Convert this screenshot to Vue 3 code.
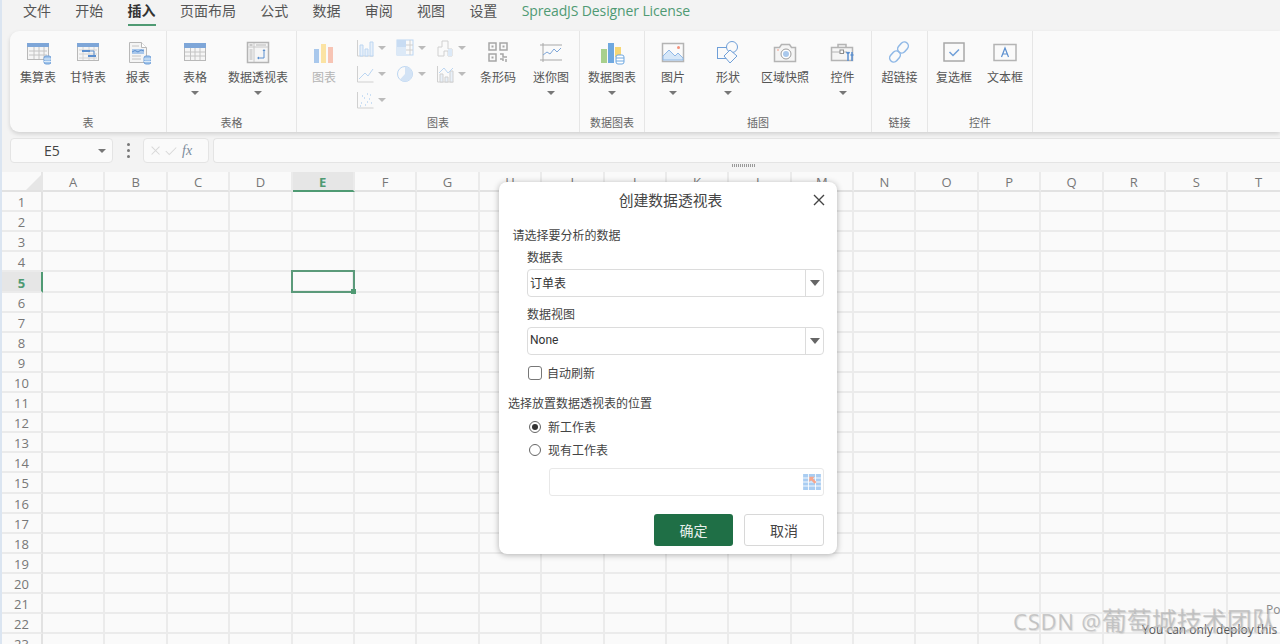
<script setup>
const tabs = ['文件', '开始', '插入', '页面布局', '公式', '数据', '审阅', '视图', '设置']

const gridLines = (c) => `<path d="M3 11h18M3 15h18M8 7v12M13 7v12M18 7v12" stroke="${c}" fill="none"/>`
const badge = `<rect x="18" y="16" width="7" height="8" rx="2" fill="#9fc3ea" stroke="#6f9fd8"/><path d="M18 19h7M18 21.500h7" stroke="#dcebf9"/>`

const icons = {
  sumTable: `<rect x="1.500" y="3.500" width="21" height="16" fill="#f5f5f5" stroke="#b8b8b8"/><rect x="1" y="3" width="22" height="4" fill="#7ea6d8"/>${gridLines('#c4c4c4')}${badge}`,
  gantt: `<rect x="1.500" y="3.500" width="21" height="17" fill="#f5f5f5" stroke="#b8b8b8"/><rect x="1" y="3" width="22" height="4" fill="#7ea6d8"/><path d="M3 10h18M3 14h18M3 18h18M7 7v13M13 7v13M18 7v13" stroke="#d4d4d4"/><rect x="6" y="10" width="8" height="2" fill="#5b8fcf"/><rect x="12" y="15" width="8" height="2" fill="#5b8fcf"/><path d="M14 11h4v4" stroke="#5b8fcf" fill="none"/>`,
  report: `<path d="M3.500 2.500h12l5 5v15h-17z" fill="#f5f5f5" stroke="#b8b8b8"/><path d="M15.500 2.500v5h5" fill="#fff" stroke="#b8b8b8"/><rect x="6" y="9" width="12" height="5" fill="#a9c8ec"/><path d="M6 12l3-1.500 3 1.500 3-2 3 1" stroke="#5b8fcf" fill="none"/><path d="M6 6h7M6 16h9M6 19h9" stroke="#c4c4c4"/>${badge}`,
  table: `<rect x="1.500" y="3.500" width="21" height="17" fill="#f5f5f5" stroke="#b8b8b8"/><rect x="1" y="3" width="22" height="5" fill="#7ea6d8"/><path d="M2 12h20M2 16h20M7.500 8v12M12 8v12M17 8v12" stroke="#c4c4c4"/>`,
  pivot: `<rect x="1.500" y="2.500" width="21" height="20" fill="#f5f5f5" stroke="#b4b4b4" stroke-width="1.500"/><path d="M2 7h20M8 3v19" stroke="#c8c8c8"/><rect x="3.500" y="4" width="3" height="2" fill="#c8c8c8"/><rect x="3.500" y="9" width="3" height="11" fill="#d6d6d6"/><rect x="10" y="4" width="10" height="2" fill="#d6d6d6"/><path d="M18 10v8h-6" stroke="#5b8fcf" fill="none"/><path d="M16.500 11l1.500-2 1.500 2zM13 16.500l-2 1.500 2 1.500z" fill="#5b8fcf"/>`,
  chart: `<rect x="2" y="9" width="5" height="14" fill="#a9c8ec"/><rect x="9" y="4" width="5" height="19" fill="#fbe3a3"/><rect x="16" y="7" width="5" height="16" fill="#f7c4b4"/>`,
  barcode: `<g fill="none" stroke="#a6a6a6" stroke-width="1.500"><rect x="3" y="3" width="7" height="7"/><rect x="14" y="3" width="7" height="7"/><rect x="3" y="14" width="7" height="7"/><path d="M14 14h3v3h4M14 19h3v2M20 19v3"/></g><rect x="5.500" y="5.500" width="2" height="2" fill="#a6a6a6"/><rect x="16.500" y="5.500" width="2" height="2" fill="#a6a6a6"/><rect x="5.500" y="16.500" width="2" height="2" fill="#a6a6a6"/>`,
  spark: `<path d="M1 5h22M1 20h22M4 3v19" stroke="#a8a8a8" fill="none"/><path d="M4 15l4-3 3 2 4-5 3 3 4-4" stroke="#7ea6d8" fill="none"/>`,
  dataChart: `<rect x="1" y="9" width="6" height="14" fill="#a8d08d"/><rect x="8" y="3" width="6" height="20" fill="#6fa8e0"/><rect x="15" y="7" width="6" height="10" fill="#f7d774"/><rect x="16" y="15" width="8" height="9" rx="2" fill="#fff" stroke="#6fa8e0"/><path d="M16 18h8M16 21h8" stroke="#6fa8e0"/>`,
  picture: `<rect x="1.500" y="3.500" width="21" height="18" fill="#fafafa" stroke="#b4b4b4" stroke-width="1.500"/><path d="M2 20v-4l6-6 6 6 3-3 5 5v2z" fill="#d6e7f8" stroke="#8fb8e6"/><circle cx="17.500" cy="7.500" r="1.500" fill="#f5917a"/>`,
  shape: `<rect x="1.500" y="7.500" width="12" height="11" fill="#fafafa" stroke="#6f9fd8"/><circle cx="16" cy="7" r="5.500" fill="#fafafa" stroke="#6f9fd8"/><path d="M14 10l7 6-7 7-6-7z" fill="#fafafa" stroke="#6f9fd8"/>`,
  camera: `<path d="M1.500 7.500h5l2-3h8l2 3h4v14h-21z" fill="#f5f5f5" stroke="#b4b4b4" stroke-width="1.500"/><circle cx="13" cy="14" r="5" fill="#fff" stroke="#9c9c9c"/><circle cx="13" cy="14" r="3" fill="#a9c8ec"/><circle cx="5" cy="10" r=".8" fill="#f5917a"/>`,
  control: `<path d="M1.500 7.500h21v13h-21zM8 7.500v-3h8v3" fill="#f5f5f5" stroke="#b4b4b4" stroke-width="1.500"/><path d="M2 12h8M14 12h3" stroke="#b4b4b4"/><rect x="10" y="10" width="3.500" height="3.500" fill="#fafafa" stroke="#8c8c8c"/><path d="M18 12v9M22 12v9M16.500 12l1.500 2 1.500-2M20.500 15h3" stroke="#5b8fcf" stroke-width="1.500" fill="none"/>`,
  link: `<g fill="none" stroke="#8fb8e6" stroke-width="1.500"><rect x="12" y="1.500" width="8" height="12" rx="4" transform="rotate(42 16 7.500)"/><rect x="4" y="10.500" width="8" height="12" rx="4" transform="rotate(42 8 16.500)"/></g>`,
  check: `<rect x="2" y="3" width="20" height="18" fill="#fafafa" stroke="#a8a8a8" stroke-width="1.500"/><path d="M7.500 12l3.500 3.500 6-6" stroke="#6f9fd8" stroke-width="1.500" fill="none"/>`,
  textbox: `<rect x="1" y="4.500" width="22" height="16" fill="#fafafa" stroke="#b4b4b4" stroke-width="1.500"/><path d="M8.500 17l3.500-9 3.500 9M9.800 14h4.400" stroke="#5b8fcf" stroke-width="1.200" fill="none"/>`
}

const small = {
  column: `<path d="M1.500 1v16h16" stroke="#d0d0d0" fill="none"/><path d="M4 6h3v11H4zM9 10h3v7H9zM14 3h3v14h-3z" fill="#e8f0f9" stroke="#bcd6f2"/>`,
  tree: `<rect x="1" y="1" width="16" height="15" fill="#fafafa" stroke="#bcd6f2"/><rect x="1" y="1" width="9" height="7" fill="#c8dcf3"/><rect x="1" y="8" width="9" height="8" fill="#dce9f7"/><path d="M10 6h7M10 11h7M14 1v15" stroke="#d0d0d0"/>`,
  step: `<path d="M2 17V8h4V2h6v8h4v7h-4v-5H8v5z" fill="#fafafa" stroke="#d0d0d0"/><path d="M12 10h4v7h-4z" fill="#dce9f7"/>`,
  line: `<path d="M1.500 1v16h16" stroke="#d0d0d0" fill="none"/><path d="M3 14l6-6 3 3 5-7" stroke="#bcd6f2" fill="none"/>`,
  pie: `<circle cx="9" cy="9" r="7.500" fill="#fafafa" stroke="#bcd6f2"/><path d="M9 1.500A7.500 7.500 0 0 1 16.500 9 7.500 7.500 0 0 1 4 14.500L9 9z" fill="#d3e3f5"/>`,
  combo: `<path d="M1.500 1v16h16" stroke="#d0d0d0" fill="none"/><path d="M4 9h3v8H4zM9 12h3v5H9zM14 6h3v11h-3z" fill="#e8f0f9" stroke="#d0d0d0"/><path d="M3 8l5-5 4 5 5-5" stroke="#bcd6f2" fill="none"/>`,
  scatter: `<path d="M1.500 1v16h16" stroke="#d0d0d0" fill="none"/><path d="M5 12h1M8 7h1M11 11h1M14 4h1M6 5h1M13 8h1M4 15h1M9 14h1M15 12h1M11 3h1" stroke="#bcd6f2" stroke-width="1.500"/>`
}

const groups = [
  { name: '表', width: 157, items: [
    { label: '集算表', icon: 'sumTable', width: 56 },
    { label: '甘特表', icon: 'gantt', width: 44 },
    { label: '报表', icon: 'report', width: 56 }
  ] },
  { name: '表格', width: 130, items: [
    { label: '表格', icon: 'table', width: 56, caret: true },
    { label: '数据透视表', icon: 'pivot', width: 70, caret: true }
  ] },
  { name: '图表', width: 283, chart: true, items: [
    { label: '图表', icon: 'chart', width: 54, off: true },
    { label: '条形码', icon: 'barcode', width: 54 },
    { label: '迷你图', icon: 'spark', width: 52, caret: true }
  ] },
  { name: '数据图表', width: 65, items: [
    { label: '数据图表', icon: 'dataChart', width: 64, caret: true }
  ] },
  { name: '插图', width: 227, items: [
    { label: '图片', icon: 'picture', width: 56, caret: true },
    { label: '形状', icon: 'shape', width: 54, caret: true },
    { label: '区域快照', icon: 'camera', width: 60 },
    { label: '控件', icon: 'control', width: 55, caret: true }
  ] },
  { name: '链接', width: 56, items: [
    { label: '超链接', icon: 'link', width: 55 }
  ] },
  { name: '控件', width: 105, items: [
    { label: '复选框', icon: 'check', width: 52 },
    { label: '文本框', icon: 'textbox', width: 50 }
  ] }
]

const smallCharts = ['column', 'tree', 'step', 'line', 'pie', 'combo', 'scatter']

const columns = 'ABCDEFGHIJKLMNOPQRST'.split('')
const rows = Array.from({ length: 23 }, (_, i) => i + 1)
</script>

<template>
  <div class="page">
    <div class="tabs">
      <div v-for="t in tabs" :key="t" class="tab" :class="{ active: t === '插入' }">{{ t }}</div>
      <div class="tab license">SpreadJS Designer License</div>
    </div>

    <div class="ribbon">
      <div v-for="g in groups" :key="g.name + g.width" class="group" :style="{ width: g.width + 'px' }">
        <div class="group_items">
          <template v-for="(item, i) in g.items" :key="item.label">
            <div class="item" :class="{ off: item.off }" :style="{ width: item.width + 'px' }">
              <svg class="item_icon" viewBox="0 0 25 25" v-html="icons[item.icon]"></svg>
              <div class="item_label">{{ item.label }}</div>
              <div v-if="item.caret" class="caret"></div>
            </div>
            <div v-if="g.chart && i === 0" class="small_charts">
              <div v-for="s in smallCharts" :key="s" class="small_chart">
                <svg viewBox="0 0 18 18" v-html="small[s]"></svg>
                <div class="caret light"></div>
              </div>
            </div>
          </template>
        </div>
        <div class="group_name">{{ g.name }}</div>
      </div>
    </div>

    <div class="formula_bar">
      <div class="name_box">
        <span class="name_text">E5</span>
        <div class="caret dark"></div>
      </div>
      <div class="dots"><i></i><i></i><i></i></div>
      <div class="fx_box">
        <svg viewBox="0 0 16 16" class="fx_icon"><path d="M3 3l9 9M12 3l-9 9" stroke="#d8d8d8" stroke-width="1.200" fill="none"/></svg>
        <svg viewBox="0 0 16 16" class="fx_icon"><path d="M2 8l4 4 8-8" stroke="#d8d8d8" stroke-width="1.200" fill="none"/></svg>
        <span class="fx_text">fx</span>
      </div>
      <div class="formula_input"></div>
    </div>
    <div class="splitter"><div class="splitter_grip"></div></div>

    <div class="sheet">
      <div class="head corner"><div class="corner_mark"></div></div>
      <div v-for="c in columns" :key="c" class="head col_head" :class="{ picked: c === 'E' }">{{ c }}</div>
      <template v-for="r in rows" :key="r">
        <div class="head row_head" :class="{ picked: r === 5 }">{{ r }}</div>
        <div v-for="c in columns" :key="c" class="cell" :class="{ current: r === 5 && c === 'E' }">
          <div v-if="r === 5 && c === 'E'" class="handle"></div>
        </div>
      </template>
    </div>

    <div class="dialog">
      <div class="dialog_title">
        创建数据透视表
        <svg class="close" viewBox="0 0 12 12"><path d="M1 1l10 10M11 1L1 11" stroke="#444" stroke-width="1.400" fill="none"/></svg>
      </div>
      <div class="line first_head">请选择要分析的数据</div>
      <div class="line field_label">数据表</div>
      <div class="select">
        <span>订单表</span>
        <div class="select_btn"><div class="select_arrow"></div></div>
      </div>
      <div class="line field_label second">数据视图</div>
      <div class="select">
        <span>None</span>
        <div class="select_btn"><div class="select_arrow"></div></div>
      </div>
      <div class="line check_row"><div class="check_box"></div>自动刷新</div>
      <div class="line second_head">选择放置数据透视表的位置</div>
      <div class="line radio_row first_radio"><div class="radio on"></div>新工作表</div>
      <div class="line radio_row"><div class="radio"></div>现有工作表</div>
      <div class="range_input">
        <svg viewBox="0 0 20 18" class="range_icon">
          <rect width="20" height="18" fill="#a9cdf2"/>
          <path d="M0 4.500h20M0 9h20M0 13.500h20M6 0v18M14 0v18" stroke="#fff"/>
          <path d="M7 3h6l-2 2 4 4-2 2-4-4-2 2z" fill="#f7a68c"/>
        </svg>
      </div>
      <div class="dialog_buttons">
        <div class="btn ok">确定</div>
        <div class="btn cancel">取消</div>
      </div>
    </div>

    <div class="deploy_note">Po</div>
    <div class="deploy_note long">You can only deploy this</div>
    <div class="watermark"><span class="watermark_latin">CSDN @</span>葡萄城技术团队</div>
  </div>
</template>

<style>
html, body {
  margin: 0;
  overflow: hidden;
}
</style>

<style scoped>
.page {
  position: relative;
  width: 1280px;
  height: 644px;
  overflow: hidden;
  background-color: #f3f3f3;
  box-shadow: inset 2px 0 0 #dbe5f1;
  color: #444;
  font-family: "Open Sans", "Noto Sans CJK SC", sans-serif;
  font-size: 12px;
}
.tabs {
  display: flex;
  height: 31px;
  padding-left: 23px;
  gap: 24.3px;
  box-sizing: border-box;
}
.tab {
  height: 26px;
  line-height: 21px;
  font-size: 14px;
  color: #555;
  font-family: "Noto Sans CJK SC", sans-serif;
  box-sizing: border-box;
}
.tab.active {
  font-weight: 700;
  color: #333;
  border-bottom: 2px solid #4f9a73;
}
.tab.license {
  color: #4f9a73;
  font-family: "Open Sans", sans-serif;
  letter-spacing: -.12px;
}
.ribbon {
  display: flex;
  height: 101px;
  margin-left: 10px;
  background-color: #fafafa;
  border-radius: 9px 0 0 9px;
  box-shadow: 0 2px 4px rgba(0, 0, 0, .14);
}
.group {
  display: flex;
  flex-direction: column;
  flex-shrink: 0;
  box-sizing: border-box;
  border-right: 1px solid #e6e6e6;
  height: 100%;
}
.group_items {
  display: flex;
  flex: 1;
  min-height: 0;
}
.group_name {
  height: 17px;
  line-height: 16px;
  font-size: 11px;
  text-align: center;
  color: #666;
}
.item {
  display: flex;
  flex-direction: column;
  align-items: center;
  flex-shrink: 0;
  padding-top: 9px;
}
.item_icon {
  width: 25px;
  height: 25px;
}
.item_label {
  margin-top: 5px;
  line-height: 16px;
  white-space: nowrap;
  color: #555;
}
.item.off .item_label {
  color: #b4b4b4;
}
.caret {
  width: 0;
  height: 0;
  margin-top: 5px;
  border-left: 4px solid transparent;
  border-right: 4px solid transparent;
  border-top: 4px solid #777;
}
.caret.light {
  margin: 0 0 0 4px;
  border-top-color: #bbb;
}
.caret.dark {
  margin: 0;
  border-top-color: #777;
}
.small_charts {
  display: grid;
  grid-template-columns: repeat(3, 40px);
  grid-auto-rows: 26px;
  width: 120px;
  padding: 4px 0 0 5px;
  box-sizing: border-box;
  flex-shrink: 0;
  align-content: start;
}
.small_chart {
  display: flex;
  align-items: center;
}
.small_chart svg {
  width: 18px;
  height: 18px;
}
.formula_bar {
  display: flex;
  align-items: stretch;
  height: 25px;
  margin-top: 6px;
  padding-left: 10px;
}
.name_box {
  display: flex;
  align-items: center;
  justify-content: space-between;
  width: 103px;
  padding: 0 6px 0 0;
  box-sizing: border-box;
  background-color: #fafafa;
  border: 1px solid #e4e4e4;
  border-radius: 4px;
}
.name_text {
  width: 82px;
  text-align: center;
  font-size: 14px;
}
.dots {
  display: flex;
  flex-direction: column;
  align-items: center;
  justify-content: center;
  gap: 3px;
  width: 30px;
}
.dots i {
  width: 3px;
  height: 3px;
  border-radius: 50%;
  background-color: #777;
}
.fx_box {
  display: flex;
  align-items: center;
  width: 66px;
  padding-left: 5px;
  box-sizing: border-box;
  background-color: #fafafa;
  border: 1px solid #e4e4e4;
  border-radius: 4px;
}
.fx_icon {
  width: 14px;
  height: 14px;
  margin-right: 1px;
}
.fx_text {
  margin-left: 3px;
  font-family: "Liberation Serif", serif;
  font-style: italic;
  font-size: 14px;
  color: #7a8a9a;
}
.formula_input {
  flex: 1;
  margin-left: 4px;
  background-color: #fafafa;
  border: 1px solid #e4e4e4;
  border-right: 0;
  border-radius: 4px 0 0 4px;
}
.splitter {
  display: flex;
  justify-content: center;
  height: 9px;
  padding-left: 208px;
}
.splitter_grip {
  width: 24px;
  height: 3px;
  margin-top: 1px;
  background: repeating-linear-gradient(90deg, #999 0 1px, transparent 1px 2px);
}
.sheet {
  display: grid;
  grid-template-columns: 41px repeat(20, 62.4px);
  grid-auto-rows: 20.1px;
  height: 472px;
  margin-left: 2px;
  overflow: hidden;
  background-color: #fafafa;
}
.head {
  display: flex;
  align-items: center;
  justify-content: center;
  box-sizing: border-box;
  padding-top: 2px;
  color: #777;
  font-family: "Open Sans", sans-serif;
  font-size: 13px;
  background-color: #fafafa;
}
.corner {
  position: relative;
  border-right: 2px solid #e6e6e6;
  border-bottom: 2px solid #e2e2e2;
}
.corner_mark {
  position: absolute;
  right: 0;
  bottom: 0;
  width: 0;
  height: 0;
  border-left: 15px solid transparent;
  border-bottom: 15px solid #e6e6e6;
}
.col_head {
  border-right: 2px solid #ebebeb;
  border-bottom: 2px solid #e2e2e2;
}
.col_head.picked {
  background-color: #e6e6e6;
  color: #4f9a73;
  font-weight: 700;
  border-bottom: 2px solid #4f9a73;
}
.row_head {
  border-right: 2px solid #e2e2e2;
  border-bottom: 2px solid #ebebeb;
}
.row_head.picked {
  background-color: #e6e6e6;
  color: #4f9a73;
  font-weight: 700;
  border-right: 2px solid #4f9a73;
}
.cell {
  position: relative;
  box-sizing: border-box;
  border-right: 2px solid #ebebeb;
  border-bottom: 2px solid #ebebeb;
}
.cell.current {
  left: -1px;
  top: -1px;
  outline: 2px solid #5b9a7a;
  outline-offset: -1px;
  z-index: 1;
}
.handle {
  position: absolute;
  right: -4px;
  bottom: -4px;
  width: 5px;
  height: 5px;
  background-color: #4f9a73;
}
.dialog {
  position: absolute;
  left: 499px;
  top: 182px;
  z-index: 2;
  width: 338px;
  height: 372px;
  box-sizing: border-box;
  background-color: #fff;
  border-radius: 8px;
  box-shadow: 0 1px 6px rgba(0, 0, 0, .3);
  color: #444;
  font-family: "Noto Sans CJK SC", sans-serif;
}
.dialog_title {
  position: relative;
  height: 36px;
  padding-left: 5px;
  line-height: 36px;
  font-size: 14.8px;
  text-align: center;
  color: #444;
}
.close {
  position: absolute;
  top: 12px;
  right: 12px;
  width: 12px;
  height: 12px;
}
.line {
  display: flex;
  align-items: center;
  height: 16px;
  line-height: 16px;
  white-space: nowrap;
}
.first_head {
  margin: 9px 0 0 13.500px;
}
.field_label {
  margin: 6px 0 4px 28px;
}
.field_label.second {
  margin: 9px 0 5px 28px;
}
.select {
  display: flex;
  align-items: center;
  justify-content: space-between;
  width: 297px;
  height: 28px;
  margin-left: 28px;
  padding-left: 2px;
  box-sizing: border-box;
  border: 1px solid #dcdcdc;
  border-radius: 4px;
  color: #333;
  font-family: Roboto, "Noto Sans CJK SC", sans-serif;
}
.select span {
  margin-top: -2px;
}
.select_btn {
  display: flex;
  align-items: center;
  justify-content: center;
  width: 17px;
  height: 100%;
  border-left: 1px solid #dcdcdc;
}
.select_arrow {
  width: 0;
  height: 0;
  border-left: 5px solid transparent;
  border-right: 5px solid transparent;
  border-top: 6px solid #666;
}
.check_row {
  margin: 10px 0 0 29px;
}
.check_box {
  width: 12px;
  height: 12px;
  margin-right: 5px;
  border: 1px solid #777;
  border-radius: 3px;
}
.second_head {
  margin: 14px 0 0 9px;
}
.radio_row {
  margin: 7px 0 0 30px;
}
.first_radio {
  margin-top: 8px;
}
.radio {
  position: relative;
  width: 10px;
  height: 10px;
  margin-right: 7px;
  border: 1px solid #666;
  border-radius: 50%;
}
.radio.on::after {
  content: "";
  position: absolute;
  left: 2px;
  top: 2px;
  width: 6px;
  height: 6px;
  border-radius: 50%;
  background-color: #333;
}
.range_input {
  display: flex;
  align-items: center;
  justify-content: flex-end;
  width: 275px;
  height: 28px;
  margin: 10px 0 0 50px;
  padding-right: 1px;
  box-sizing: border-box;
  border: 1px solid #e8e8e8;
  border-radius: 3px;
}
.range_icon {
  width: 20px;
  height: 16px;
}
.dialog_buttons {
  display: flex;
  gap: 11px;
  margin: 18px 0 0 155px;
}
.btn {
  display: flex;
  align-items: center;
  justify-content: center;
  height: 32px;
  padding-bottom: 1px;
  box-sizing: border-box;
  border-radius: 3px;
  font-size: 14px;
}
.btn.ok {
  width: 79px;
  background-color: #1f6f46;
  color: #e8f0ec;
}
.btn.cancel {
  width: 80px;
  border: 1px solid #d8d8d8;
  color: #444;
}
.deploy_note {
  position: absolute;
  left: 1266px;
  top: 601px;
  z-index: 3;
  font-family: "Open Sans", sans-serif;
  font-size: 12px;
  color: #888;
}
.deploy_note.long {
  left: 1142px;
  top: 621px;
  color: #555;
  white-space: nowrap;
}
.watermark {
  position: absolute;
  left: 1013px;
  top: 604px;
  z-index: 4;
  font-family: "Noto Sans CJK SC", sans-serif;
  font-size: 25px;
  line-height: 30px;
  white-space: nowrap;
  color: rgba(180, 180, 180, .7);
  text-shadow: 1px 1px 1px rgba(130, 130, 130, .25);
}
.watermark_latin {
  font-family: "Open Sans", sans-serif;
  font-size: 22px;
  letter-spacing: .8px;
}
</style>
